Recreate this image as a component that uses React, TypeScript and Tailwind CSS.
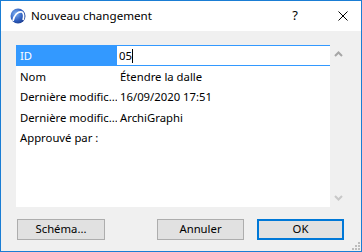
export default function App() {
  const rows = [
    { label: "Nom", value: "Étendre la dalle" },
    { label: "Dernière modific...", value: "16/09/2020 17:51" },
    { label: "Dernière modific...", value: "ArchiGraphi" },
    { label: "Approuvé par :", value: "" },
  ]

  return (
    <div
      className="w-[362px] h-[252px] border border-[#1a7dd4] flex flex-col bg-[#f0f0f0] text-[11.3px] text-black"
      style={{ fontFamily: '"Noto Sans", "Open Sans", sans-serif' }}
    >
      {/* Title bar */}
      <div className="h-[30px] bg-white flex items-center shrink-0">
        <svg className="ml-[9px] w-[16px] h-[16px]" viewBox="0 0 16 16">
          <defs>
            <radialGradient id="g" cx="0.35" cy="0.35" r="0.75">
              <stop offset="0" stopColor="#7fb0f0" />
              <stop offset="0.6" stopColor="#2f5fc0" />
              <stop offset="1" stopColor="#1b3a8a" />
            </radialGradient>
          </defs>
          <circle cx="8" cy="8" r="7.5" fill="url(#g)" />
          <path d="M3 13 C4 7 8 3 12 4 C14 5 14 9 13 12" fill="none" stroke="#fff" strokeWidth="1.6" />
        </svg>
        <span className="ml-[5px] text-[11.6px]">Nouveau changement</span>
        <span className="ml-auto mr-[40px] text-[13px]">?</span>
        <svg className="mr-[13px] w-[10px] h-[10px]" viewBox="0 0 10 10">
          <path d="M0.5 0.5 L9.5 9.5 M9.5 0.5 L0.5 9.5" stroke="#000" strokeWidth="1" />
        </svg>
      </div>

      {/* Body */}
      <div className="flex-1 flex flex-col pt-[14px] pl-[15px] pr-[14px]">
        <div className="h-[162px] w-[330px] flex bg-white">
          <div className="w-[314px] flex flex-col">
            <div className="h-[21px] flex bg-[#3399ff]">
              <div className="w-[101px] pl-[4px] pt-[1px] flex items-center text-white">ID</div>
              <div className="flex-1 bg-white border-y border-[#3399ff] flex items-center pl-[2px] pt-[1px]">
                <span>05</span>
                <span className="w-[1px] h-[14px] bg-black" />
              </div>
            </div>
            {rows.map((r, i) => (
              <div key={i} className="h-[20.5px] pt-[2px] flex items-center">
                <div className="w-[101px] pl-[4px] whitespace-nowrap overflow-hidden">{r.label}</div>
                <div className="pl-[3px] whitespace-nowrap">{r.value}</div>
              </div>
            ))}
          </div>
          <div className="w-[16px] bg-[#f0f0f0] flex flex-col items-center justify-between py-[6px]">
            <svg className="w-[9px] h-[6px]" viewBox="0 0 9 6">
              <path d="M1 5 L4.5 1.5 L8 5" fill="none" stroke="#a6a6a6" strokeWidth="2" />
            </svg>
            <svg className="w-[9px] h-[6px]" viewBox="0 0 9 6">
              <path d="M1 1 L4.5 4.5 L8 1" fill="none" stroke="#c8c8c8" strokeWidth="2" />
            </svg>
          </div>
        </div>

        {/* Buttons */}
        <div className="flex mt-[12px]">
          <button className="ml-[1px] w-[88px] h-[21px] bg-[#e1e1e1] border border-[#adadad] flex items-center justify-center">
            Schéma...
          </button>
          <button className="ml-[52px] w-[87px] h-[21px] bg-[#e1e1e1] border border-[#adadad] flex items-center justify-center">
            Annuler
          </button>
          <button className="ml-[13px] w-[87px] h-[21px] bg-[#e1e1e1] border-2 border-[#0078d7] flex items-center justify-center">
            OK
          </button>
        </div>
        <div className="flex-1 flex justify-end items-end -mr-[13px] pb-[1px]">
          <svg className="w-[8px] h-[8px]" viewBox="0 0 8 8" fill="#bcbcbc">
            <rect x="6" y="0" width="2" height="2" />
            <rect x="3" y="3" width="2" height="2" />
            <rect x="6" y="3" width="2" height="2" />
            <rect x="0" y="6" width="2" height="2" />
            <rect x="3" y="6" width="2" height="2" />
            <rect x="6" y="6" width="2" height="2" />
          </svg>
        </div>
      </div>
    </div>
  )
}
